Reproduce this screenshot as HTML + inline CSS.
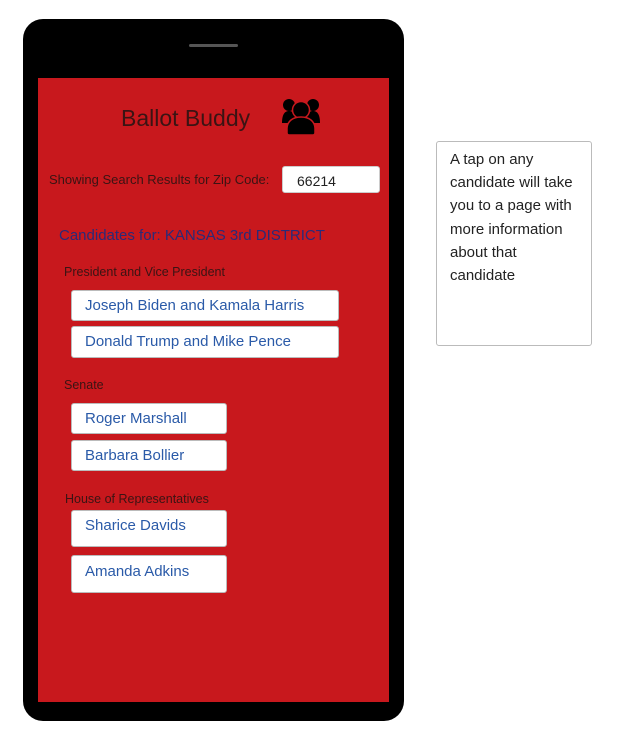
<!DOCTYPE html>
<html><head><style>
*{margin:0;padding:0;box-sizing:border-box}
body{width:624px;height:742px;background:#fff;position:relative;font-family:"Liberation Sans",sans-serif;overflow:hidden}
.phone{position:absolute;left:23px;top:19px;width:381px;height:702px;background:#000;border-radius:20px}
.bar{position:absolute;left:189px;top:44px;width:49px;height:3px;background:#555;border-radius:2px}
.screen{position:absolute;left:38px;top:78px;width:351px;height:624px;background:#c8181d}
.t{position:absolute;white-space:nowrap}
.btn{position:absolute;left:71px;background:#fff;border:1px solid #bbb;border-radius:3px;color:#2a5aa8;font-size:15px;padding-left:13px}
.tip{position:absolute;left:436px;top:141px;width:156px;height:205px;border:1px solid #bbb;border-radius:3px;padding:6px 8px 0 13px;font-size:15px;line-height:23.2px;color:#222}
</style></head><body>
<div class="phone"></div>
<div class="bar"></div>
<div class="screen"></div>
<div class="t" style="left:121px;top:105px;font-size:23px;color:#3a1414">Ballot Buddy</div>
<svg style="position:absolute;left:281px;top:98px" width="40" height="37" viewBox="0 0 40 37">
<circle cx="8" cy="7" r="6" fill="#000"/><circle cx="32" cy="7" r="6" fill="#000"/>
<path d="M1 25c0-9 3-12 7-12s7 3 7 12z" fill="#000"/><path d="M25 25c0-9 3-12 7-12s7 3 7 12z" fill="#000"/>
<circle cx="20" cy="12" r="8.5" fill="#000" stroke="#c8181d" stroke-width="1.5"/>
<path d="M6 35c0 1 1 2 2 2h24c1 0 2-1 2-2v-4c0-8-6-12-14-12s-14 4-14 12z" fill="#000" stroke="#c8181d" stroke-width="1.5"/>
</svg>
<div class="t" style="left:49px;top:172px;font-size:13px;color:#3a1414">Showing Search Results for Zip Code:</div>
<div style="position:absolute;left:282px;top:166px;width:98px;height:27px;background:#fff;border:1px solid #ccc;border-radius:3px;font-size:14px;padding:6px 0 0 14px;color:#222">66214</div>
<div class="t" style="left:59px;top:227px;font-size:15px;color:#2a2a78">Candidates for: KANSAS 3rd DISTRICT</div>
<div class="t" style="left:64px;top:265px;font-size:12.5px;color:#3a1414">President and Vice President</div>
<div class="btn" style="top:290px;width:268px;height:31px;line-height:29px">Joseph Biden and Kamala Harris</div>
<div class="btn" style="top:326px;width:268px;height:32px;line-height:30px">Donald Trump and Mike Pence</div>
<div class="t" style="left:64px;top:378px;font-size:12.5px;color:#3a1414">Senate</div>
<div class="btn" style="top:403px;width:156px;height:31px;line-height:29px">Roger Marshall</div>
<div class="btn" style="top:440px;width:156px;height:31px;line-height:29px">Barbara Bollier</div>
<div class="t" style="left:65px;top:492px;font-size:12.5px;color:#3a1414">House of Representatives</div>
<div class="btn" style="top:510px;width:156px;height:37px;line-height:30px">Sharice Davids</div>
<div class="btn" style="top:555px;width:156px;height:38px;line-height:31px">Amanda Adkins</div>
<div class="tip">A tap on any candidate will take you to a page with more information about that candidate</div>
</body></html>
